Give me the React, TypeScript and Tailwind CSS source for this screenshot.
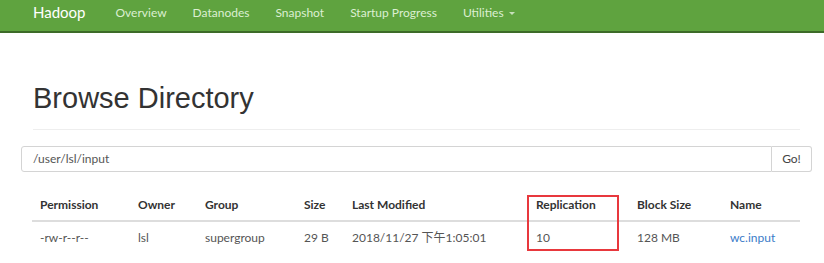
import React from 'react'

const cols = [
  { key: 'perm', label: 'Permission', w: 'w-[98px]' },
  { key: 'owner', label: 'Owner', w: 'w-[67px]' },
  { key: 'group', label: 'Group', w: 'w-[99px]' },
  { key: 'size', label: 'Size', w: 'w-[48px]' },
  { key: 'mod', label: 'Last Modified', w: 'w-[184px]' },
  { key: 'rep', label: 'Replication', w: 'w-[101px]' },
  { key: 'block', label: 'Block Size', w: 'w-[93px]' },
  { key: 'name', label: 'Name', w: 'w-[78px]' },
]

const row: Record<string, string> = {
  perm: '-rw-r--r--',
  owner: 'lsl',
  group: 'supergroup',
  size: '29 B',
  mod: '2018/11/27 下午1:05:01',
  rep: '10',
  block: '128 MB',
  name: 'wc.input',
}

export default function App() {
  return (
    <div className="w-[824px] h-[263px] bg-white overflow-hidden font-['Lato','Noto_Sans_CJK_SC',sans-serif]">
      {/* Navbar */}
      <div className="h-[33px] bg-[#5fa33f] border-b-2 border-[#3d6b28] flex items-center pl-[33px] pb-[6px]">
        <span className="text-white text-[15px] mr-[30px]">Hadoop</span>
        <nav className="flex items-center gap-[26px] text-[12px] text-[#dcefd2]">
          <span>Overview</span>
          <span>Datanodes</span>
          <span>Snapshot</span>
          <span>Startup Progress</span>
          <span className="flex items-center gap-[5px]">
            Utilities
            <span className="border-x-[3px] border-x-transparent border-t-[3px] border-t-[#c7dfbb] mt-[2px]" />
          </span>
        </nav>
      </div>

      {/* Header */}
      <div className="px-[33px] pt-[49px]">
        <h1 className="text-[29px] leading-[33px] text-[#333] font-['Liberation_Sans',Arial,sans-serif]">
          Browse Directory
        </h1>
        <div className="mt-[14px] w-[767px] border-t border-[#eeeeee]" />
      </div>

      {/* Path input */}
      <div className="mx-[21px] mt-[16px] flex h-[26px] w-[791px] text-[12px]">
        <div className="flex-1 flex items-center border border-[#d4d4d4] rounded-l-[3px] px-[11px] text-[#555]">
          /user/lsl/input
        </div>
        <div className="w-[40px] flex items-center justify-center border border-l-0 border-[#d4d4d4] rounded-r-[3px] text-[#444]">
          Go!
        </div>
      </div>

      {/* Table */}
      <div className="relative ml-[32px] mt-[18px] w-[768px] text-[12px]">
        <div className="flex h-[32px] items-center border-b-2 border-[#dddddd] font-bold text-[#333]">
          {cols.map((c) => (
            <div key={c.key} className={`${c.w} px-[8px]`}>
              {c.label}
            </div>
          ))}
        </div>
        <div className="flex h-[31px] items-center text-[#555]">
          {cols.map((c) => (
            <div key={c.key} className={`${c.w} px-[8px] ${c.key === 'name' ? 'text-[#3a7bc8]' : ''}`}>
              {row[c.key]}
            </div>
          ))}
        </div>
        <div className="absolute left-[495px] top-[5px] w-[92px] h-[56px] border-2 border-[#e8383d]" />
      </div>
    </div>
  )
}
